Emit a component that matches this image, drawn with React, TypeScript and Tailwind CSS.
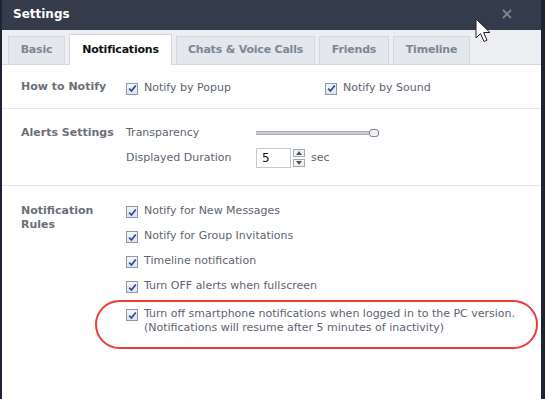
import React from 'react';

const font = { fontFamily: '"DejaVu Sans", Tahoma, sans-serif' };

const Check: React.FC = () => (
  <span className="w-[12px] h-[12px] border border-[#8e97a6] bg-gradient-to-b from-[#f4f6f9] to-[#dfe4ec] flex items-center justify-center shrink-0">
    <svg width="9" height="9" viewBox="0 0 9 9">
      <path d="M1.2 4.6 L3.5 7 L7.8 1.5" fill="none" stroke="#2c4da0" strokeWidth="1.8" />
    </svg>
  </span>
);

const Option: React.FC<{ children: React.ReactNode }> = ({ children }) => (
  <div className="flex items-start gap-[6px]">
    <span className="mt-[2px]"><Check /></span>
    <span className="leading-[14px]">{children}</span>
  </div>
);

const tabs = ['Basic', 'Notifications', 'Chats & Voice Calls', 'Friends', 'Timeline'];
const tabWidths = ['w-[57px]', 'w-[103px]', 'w-[139px]', 'w-[70px]', 'w-[77px]'];

export default function App() {
  return (
    <div className="w-[545px] h-[399px] bg-[#1e2432] relative overflow-hidden text-[11px] text-[#5d6472]" style={font}>
      <div className="ml-[2px] w-[539px] h-full flex flex-col bg-white">
        <div className="h-[30px] bg-[#343b4a] flex items-center justify-between pl-[11px] pr-[29px] shrink-0">
          <span className="text-white font-bold text-[12px] -mt-[2px]">Settings</span>
          <svg width="10" height="10" viewBox="0 0 10 10" className="-mt-[3px]">
            <path d="M1 1 L9 9 M9 1 L1 9" stroke="#80868f" strokeWidth="1.8" />
          </svg>
        </div>

        <div className="h-[35px] bg-[#eceef2] border-b border-[#d6dae0] flex items-end pl-[6px] gap-[4px] shrink-0">
          {tabs.map((t, i) => (
            <div
              key={t}
              className={
                i === 1
                  ? `${tabWidths[i]} h-[31px] -mb-px bg-white border border-b-0 border-[#d3d7de] flex items-center justify-center font-bold text-[11px] tracking-[-0.2px] text-[#111]`
                  : `${tabWidths[i]} h-[28px] bg-[#e4e7ec] border border-b-0 border-[#d3d7de] flex items-center justify-center font-bold text-[11px] tracking-[-0.2px] text-[#7c8697]`
              }
            >
              {t}
            </div>
          ))}
        </div>

        <div className="flex h-[44px] items-center border-b border-[#e6e8eb] pt-[2px]">
          <div className="w-[124px] pl-[19px] font-bold text-[#6b6f77]">How to Notify</div>
          <div className="w-[199px]"><Option>Notify by Popup</Option></div>
          <Option>Notify by Sound</Option>
        </div>

        <div className="flex h-[77px] pt-[17px] border-b border-[#e6e8eb]">
          <div className="w-[124px] pl-[19px] font-bold text-[#6b6f77] leading-[14px]">Alerts Settings</div>
          <div className="flex flex-col gap-[8px]">
            <div className="flex items-center h-[14px]">
              <span className="w-[130px]">Transparency</span>
              <div className="flex items-center">
                <div className="w-[113px] h-[4px] bg-[#c9cdd3] border-y border-[#a8adb5]" />
                <div className="w-[10px] h-[8px] rounded-[3px] border border-[#7d8590] bg-[#eef0f3]" />
              </div>
            </div>
            <div className="flex items-center">
              <span className="w-[130px]">Displayed Duration</span>
              <div className="w-[35px] h-[20px] border border-[#c6cad0] flex items-center pl-[5px] text-[#111] text-[12px]">5</div>
              <div className="flex flex-col gap-[2px] ml-[2px]">
                <div className="w-[12px] h-[8px] border border-[#a3a9b2] bg-[#f2f3f5] flex items-center justify-center">
                  <svg width="6" height="4" viewBox="0 0 6 4"><path d="M0 4 L3 0 L6 4Z" fill="#555" /></svg>
                </div>
                <div className="w-[12px] h-[8px] border border-[#a3a9b2] bg-[#f2f3f5] flex items-center justify-center">
                  <svg width="6" height="4" viewBox="0 0 6 4"><path d="M0 0 L3 4 L6 0Z" fill="#555" /></svg>
                </div>
              </div>
              <span className="ml-[6px]">sec</span>
            </div>
          </div>
        </div>

        <div className="flex pt-[18px]">
          <div className="w-[124px] pl-[19px] font-bold text-[#6b6f77] leading-[14px]">Notification<br />Rules</div>
          <div className="flex flex-col gap-[11px]">
            <Option>Notify for New Messages</Option>
            <Option>Notify for Group Invitations</Option>
            <Option>Timeline notification</Option>
            <Option>Turn OFF alerts when fullscreen</Option>
            <div className="mt-[3px]">
              <Option>
                Turn off smartphone notifications when logged in to the PC version.
                <br />
                (Notifications will resume after 5 minutes of inactivity)
              </Option>
            </div>
          </div>
        </div>
      </div>

      <div className="absolute left-[95px] top-[300px] w-[443px] h-[49px] rounded-full border-2 border-[#ee3b36]" />

      <svg className="absolute left-[475px] top-[18px]" width="17" height="27" viewBox="0 0 17 27">
        <path d="M1 1 L1 20 L5.5 15.5 L9 23.5 L12 22.2 L8.6 14.5 L15 14.5 Z" fill="#fff" stroke="#222" strokeWidth="1" strokeLinejoin="round" />
      </svg>
    </div>
  );
}
